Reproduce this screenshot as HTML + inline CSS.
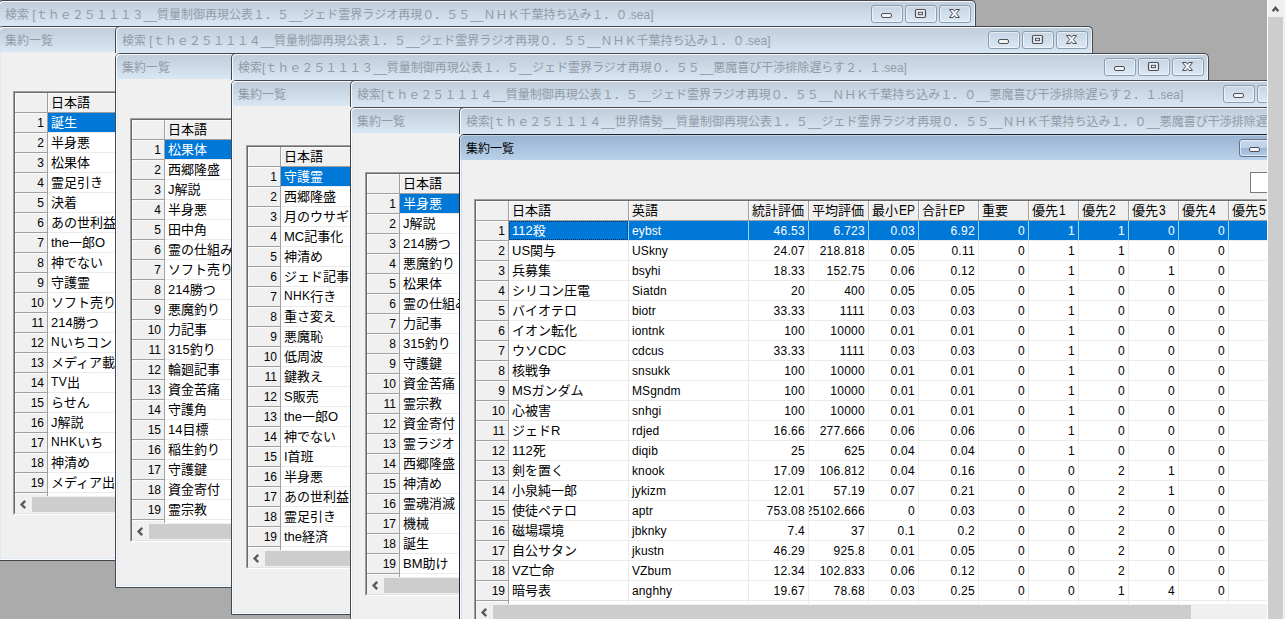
<!DOCTYPE html>
<html lang="ja"><head><meta charset="utf-8"><title>検索</title><style>
html,body{margin:0;padding:0}
body{width:1286px;height:619px;overflow:hidden;background:#ababab;position:relative;font-family:"Liberation Sans",sans-serif;font-size:12px;color:#000}
.win{position:absolute;width:978px;height:562px}
.cap{position:absolute;left:0;top:0;width:976px;height:26px;border:1px solid #434850;border-bottom:0;border-radius:5px 5px 0 0;background:linear-gradient(#bfcddb,#d9e6f4);box-shadow:inset 1px 1px 0 rgba(255,255,255,.85),inset -1px 0 0 rgba(255,255,255,.7)}
.child{position:absolute;left:0;top:27px;width:976px;height:533px;border:1px solid #434850;border-radius:5px 5px 0 0;background:#f0f0f0;box-shadow:inset 0 0 0 1px #fbfdff,inset 0 0 0 2px #dfe9f5}
.child.active{border-color:#22262b;box-shadow:inset 0 0 0 1px #fbfdff,inset 0 0 0 2px #c9dcf0}
.cap2{position:absolute;left:0;top:0;right:0;height:25px;border-radius:4px 4px 0 0;background:linear-gradient(#bfcddb,#d9e6f4);box-shadow:inset 1px 1px 0 rgba(255,255,255,.85),inset -1px 0 0 rgba(255,255,255,.7)}
.active .cap2{background:linear-gradient(#99b4d1,#b9d1ea);box-shadow:inset 1px 1px 0 rgba(255,255,255,.4),inset -1px 0 0 rgba(255,255,255,.4)}
.ttl{position:absolute;left:6px;top:6px;height:17px;white-space:nowrap}
.cap2 .ttl{left:6px;top:6px}
svg.tx{display:block;overflow:visible}
.tt{display:inline-block;font-family:"Liberation Sans","Noto Sans CJK JP",sans-serif;font-size:12px;line-height:16px;color:#929ba6;white-space:nowrap}
.active .cap2 .tt{color:#000}
.gt{flex:none;font-family:"Liberation Sans","Noto Sans CJK JP",sans-serif;font-size:13px;line-height:19px;white-space:nowrap}
.btn{position:absolute;top:4px;width:30px;height:16px;border:1px solid #8b9db4;border-radius:3px;background:linear-gradient(#c6d4e3,#dce8f5);box-shadow:inset 0 0 0 1px rgba(255,255,255,.55)}
.btn svg{display:block}
.btn.act{border-color:#5f738f;background:linear-gradient(#c9d9ec 0,#bdd0e8 48%,#9cb6d6 52%,#b4cbe6 100%)}
.grid{position:absolute;left:14px;top:64px;width:940px;height:420px;border:2px solid;border-color:#a0a0a0 #fff #fff #a0a0a0;background:#fff}
.grid:before{content:"";position:absolute;left:-1px;top:-1px;right:-1px;bottom:-1px;border:1px solid;border-color:#696969 #e3e3e3 #e3e3e3 #696969;pointer-events:none}
.gin{position:absolute;left:0;top:0;right:0;bottom:0;overflow:hidden}
.hr,.dr{height:20px;white-space:nowrap;display:flex}
.rh,.hc,.dc{box-sizing:border-box;height:20px;flex:none}
.rh{width:33px;border-right:1px solid #a0a0a0;border-bottom:1px solid #a0a0a0;background:#f0f0f0;box-shadow:inset 1px 1px 0 rgba(255,255,255,.75);text-align:right;line-height:21px;padding-right:3px}
.hc{border-right:1px solid #a0a0a0;border-bottom:1px solid #a0a0a0;background:#f0f0f0;box-shadow:inset 1px 1px 0 rgba(255,255,255,.75);position:relative}
.dc{border-right:1px solid #ebebeb;border-bottom:1px solid #ebebeb;background:#fff;position:relative;line-height:19px;white-space:nowrap;overflow:hidden}
.dc.sel{background:#0078d7;color:#fff;border-right-color:#9fd0f5;border-bottom-color:#ebebeb}
.dc.foc:after{content:"";position:absolute;left:0;top:0;right:0;bottom:0;border:1px dotted #0a2a55}
.hc,.dc{display:flex;padding-left:3px}
svg.tx{flex:none}
.as{font-size:12px;line-height:18px;letter-spacing:.3px;flex:none}
.hx{font-size:12px;line-height:19px;flex:none;display:inline-block;transform:translateY(.8px) scaleY(1.15);transform-origin:0 13.5px;letter-spacing:.1px;margin-left:1px}
.en{display:block;padding-left:3px;line-height:20.5px;letter-spacing:.12px}
.nu{display:block;text-align:right;padding-left:0;padding-right:3px;direction:rtl;line-height:20.5px;letter-spacing:.28px}
.hs{position:absolute;left:0;right:0;bottom:0;height:17px;background:#f0f0f0}
.hs .la{position:absolute;left:0;top:0}
.hs .th{position:absolute;top:1px;height:15px;background:#cdcdcd}
.tbox{position:absolute;left:790px;top:37px;width:40px;height:19px;border:1px solid #7a7a7a;background:#fff}
.vs{position:absolute;left:1267px;top:0;width:19px;height:619px;background:#f0f0f0;border-left:1px solid #fff;box-sizing:border-box}
.vs .th{position:absolute;left:0;top:17px;width:15px;bottom:0;background:#cdcdcd}
.vs svg{position:absolute;left:0;top:0}
.vs:after{content:"";position:absolute;right:0;top:0;bottom:0;width:1px;background:#fafafa}
.w1 .cap{height:25px}
.w1 .child{top:26px}
</style></head><body><div class="win w1" style="left:-2px;top:0px"><div class="cap"><div class="ttl"><span class="tt">検索 [ｔｈｅ２５１１１３__質量制御再現公表１．５__ジェド霊界ラジオ再現０．５５__ＮＨＫ千葉持ち込み１．０.sea]</span></div><div class="btn" style="right:72px"><svg width="30" height="16" viewBox="0 0 30 16"><rect x="9.5" y="7.5" width="10" height="4" rx="1.5" fill="#f4f4f6" stroke="#4a4f58"/></svg></div><div class="btn" style="right:38px"><svg width="30" height="16" viewBox="0 0 30 16"><rect x="9.5" y="3.5" width="10" height="8" rx="1.2" fill="#eceef2" stroke="#4a4f58" stroke-width="1.2"/><rect x="12.4" y="6.3" width="4.2" height="2.4" fill="#dfe6ef" stroke="#4a4f58"/></svg></div><div class="btn" style="right:4px"><svg width="30" height="16" viewBox="0 0 30 16"><path d="M9.5 3.5h3.7l1.3 1.8 1.3-1.8h3.7l-3.1 4 3.1 4h-3.7l-1.3-1.8-1.3 1.8H9.5l3.1-4z" fill="#f6f6f8" stroke="#4a4f58" stroke-width="1" stroke-linejoin="round"/></svg></div></div><div class="child" style=""><div class="cap2"><div class="ttl"><span class="tt">集約一覧</span></div><div class="btn" style="right:72px"><svg width="30" height="16" viewBox="0 0 30 16"><rect x="9.5" y="7.5" width="10" height="4" rx="1.5" fill="#f4f4f6" stroke="#4a4f58"/></svg></div><div class="btn" style="right:38px"><svg width="30" height="16" viewBox="0 0 30 16"><rect x="9.5" y="3.5" width="10" height="8" rx="1.2" fill="#eceef2" stroke="#4a4f58" stroke-width="1.2"/><rect x="12.4" y="6.3" width="4.2" height="2.4" fill="#dfe6ef" stroke="#4a4f58"/></svg></div><div class="btn" style="right:4px"><svg width="30" height="16" viewBox="0 0 30 16"><path d="M9.5 3.5h3.7l1.3 1.8 1.3-1.8h3.7l-3.1 4 3.1 4h-3.7l-1.3-1.8-1.3 1.8H9.5l3.1-4z" fill="#f6f6f8" stroke="#4a4f58" stroke-width="1" stroke-linejoin="round"/></svg></div></div><div class="grid"><div class="gin"><div class="hr"><div class="rh c0"></div><div class="hc" style="width:401px"><span class="gt">日本語</span></div></div><div class="dr"><div class="rh">1</div><div class="dc sel" style="width:401px"><span class="gt">誕生</span></div></div><div class="dr"><div class="rh">2</div><div class="dc" style="width:401px"><span class="gt">半身悪</span></div></div><div class="dr"><div class="rh">3</div><div class="dc" style="width:401px"><span class="gt">松果体</span></div></div><div class="dr"><div class="rh">4</div><div class="dc" style="width:401px"><span class="gt">霊足引き</span></div></div><div class="dr"><div class="rh">5</div><div class="dc" style="width:401px"><span class="gt">決着</span></div></div><div class="dr"><div class="rh">6</div><div class="dc" style="width:401px"><span class="gt">あの世利益</span></div></div><div class="dr"><div class="rh">7</div><div class="dc" style="width:401px"><span class="gt">the一郎O</span></div></div><div class="dr"><div class="rh">8</div><div class="dc" style="width:401px"><span class="gt">神でない</span></div></div><div class="dr"><div class="rh">9</div><div class="dc" style="width:401px"><span class="gt">守護霊</span></div></div><div class="dr"><div class="rh">10</div><div class="dc" style="width:401px"><span class="gt">ソフト売り</span></div></div><div class="dr"><div class="rh">11</div><div class="dc" style="width:401px"><span class="gt">214勝つ</span></div></div><div class="dr"><div class="rh">12</div><div class="dc" style="width:401px"><span class="as">N</span><span class="gt">いちコン</span></div></div><div class="dr"><div class="rh">13</div><div class="dc" style="width:401px"><span class="gt">メディア載り</span></div></div><div class="dr"><div class="rh">14</div><div class="dc" style="width:401px"><span class="as">TV</span><span class="gt">出</span></div></div><div class="dr"><div class="rh">15</div><div class="dc" style="width:401px"><span class="gt">らせん</span></div></div><div class="dr"><div class="rh">16</div><div class="dc" style="width:401px"><span class="gt">J解説</span></div></div><div class="dr"><div class="rh">17</div><div class="dc" style="width:401px"><span class="as">NHK</span><span class="gt">いち</span></div></div><div class="dr"><div class="rh">18</div><div class="dc" style="width:401px"><span class="gt">神清め</span></div></div><div class="dr"><div class="rh">19</div><div class="dc" style="width:401px"><span class="gt">メディア出る</span></div></div><div class="dr"><div class="rh"></div><div class="dc" style="width:401px"><span class="gt">霊の仕組み</span></div></div><div class="hs"><svg class="la" width="17" height="17" viewBox="0 0 17 17"><path d="M10.2 4.9L6.6 8.5l3.6 3.6" fill="none" stroke="#5a5a5a" stroke-width="2.4"/></svg><div class="th" style="left:17px;right:0"></div></div></div></div></div></div><div class="win" style="left:115px;top:26px"><div class="cap"><div class="ttl"><span class="tt">検索 [ｔｈｅ２５１１１４__質量制御再現公表１．５__ジェド霊界ラジオ再現０．５５__ＮＨＫ千葉持ち込み１．０.sea]</span></div><div class="btn" style="right:72px"><svg width="30" height="16" viewBox="0 0 30 16"><rect x="9.5" y="7.5" width="10" height="4" rx="1.5" fill="#f4f4f6" stroke="#4a4f58"/></svg></div><div class="btn" style="right:38px"><svg width="30" height="16" viewBox="0 0 30 16"><rect x="9.5" y="3.5" width="10" height="8" rx="1.2" fill="#eceef2" stroke="#4a4f58" stroke-width="1.2"/><rect x="12.4" y="6.3" width="4.2" height="2.4" fill="#dfe6ef" stroke="#4a4f58"/></svg></div><div class="btn" style="right:4px"><svg width="30" height="16" viewBox="0 0 30 16"><path d="M9.5 3.5h3.7l1.3 1.8 1.3-1.8h3.7l-3.1 4 3.1 4h-3.7l-1.3-1.8-1.3 1.8H9.5l3.1-4z" fill="#f6f6f8" stroke="#4a4f58" stroke-width="1" stroke-linejoin="round"/></svg></div></div><div class="child" style=""><div class="cap2"><div class="ttl"><span class="tt">集約一覧</span></div><div class="btn" style="right:72px"><svg width="30" height="16" viewBox="0 0 30 16"><rect x="9.5" y="7.5" width="10" height="4" rx="1.5" fill="#f4f4f6" stroke="#4a4f58"/></svg></div><div class="btn" style="right:38px"><svg width="30" height="16" viewBox="0 0 30 16"><rect x="9.5" y="3.5" width="10" height="8" rx="1.2" fill="#eceef2" stroke="#4a4f58" stroke-width="1.2"/><rect x="12.4" y="6.3" width="4.2" height="2.4" fill="#dfe6ef" stroke="#4a4f58"/></svg></div><div class="btn" style="right:4px"><svg width="30" height="16" viewBox="0 0 30 16"><path d="M9.5 3.5h3.7l1.3 1.8 1.3-1.8h3.7l-3.1 4 3.1 4h-3.7l-1.3-1.8-1.3 1.8H9.5l3.1-4z" fill="#f6f6f8" stroke="#4a4f58" stroke-width="1" stroke-linejoin="round"/></svg></div></div><div class="grid"><div class="gin"><div class="hr"><div class="rh c0"></div><div class="hc" style="width:401px"><span class="gt">日本語</span></div></div><div class="dr"><div class="rh">1</div><div class="dc sel" style="width:401px"><span class="gt">松果体</span></div></div><div class="dr"><div class="rh">2</div><div class="dc" style="width:401px"><span class="gt">西郷隆盛</span></div></div><div class="dr"><div class="rh">3</div><div class="dc" style="width:401px"><span class="gt">J解説</span></div></div><div class="dr"><div class="rh">4</div><div class="dc" style="width:401px"><span class="gt">半身悪</span></div></div><div class="dr"><div class="rh">5</div><div class="dc" style="width:401px"><span class="gt">田中角</span></div></div><div class="dr"><div class="rh">6</div><div class="dc" style="width:401px"><span class="gt">霊の仕組み</span></div></div><div class="dr"><div class="rh">7</div><div class="dc" style="width:401px"><span class="gt">ソフト売り</span></div></div><div class="dr"><div class="rh">8</div><div class="dc" style="width:401px"><span class="gt">214勝つ</span></div></div><div class="dr"><div class="rh">9</div><div class="dc" style="width:401px"><span class="gt">悪魔釣り</span></div></div><div class="dr"><div class="rh">10</div><div class="dc" style="width:401px"><span class="gt">力記事</span></div></div><div class="dr"><div class="rh">11</div><div class="dc" style="width:401px"><span class="gt">315釣り</span></div></div><div class="dr"><div class="rh">12</div><div class="dc" style="width:401px"><span class="gt">輪廻記事</span></div></div><div class="dr"><div class="rh">13</div><div class="dc" style="width:401px"><span class="gt">資金苦痛</span></div></div><div class="dr"><div class="rh">14</div><div class="dc" style="width:401px"><span class="gt">守護角</span></div></div><div class="dr"><div class="rh">15</div><div class="dc" style="width:401px"><span class="gt">14目標</span></div></div><div class="dr"><div class="rh">16</div><div class="dc" style="width:401px"><span class="gt">稲生釣り</span></div></div><div class="dr"><div class="rh">17</div><div class="dc" style="width:401px"><span class="gt">守護鍵</span></div></div><div class="dr"><div class="rh">18</div><div class="dc" style="width:401px"><span class="gt">資金寄付</span></div></div><div class="dr"><div class="rh">19</div><div class="dc" style="width:401px"><span class="gt">霊宗教</span></div></div><div class="dr"><div class="rh"></div><div class="dc" style="width:401px"><span class="gt">輪廻記事</span></div></div><div class="hs"><svg class="la" width="17" height="17" viewBox="0 0 17 17"><path d="M10.2 4.9L6.6 8.5l3.6 3.6" fill="none" stroke="#5a5a5a" stroke-width="2.4"/></svg><div class="th" style="left:17px;right:0"></div></div></div></div></div></div><div class="win" style="left:231px;top:53px"><div class="cap"><div class="ttl"><span class="tt">検索[ｔｈｅ２５１１１３__質量制御再現公表１．５__ジェド霊界ラジオ再現０．５５__悪魔喜び干渉排除遅らす２．１.sea]</span></div><div class="btn" style="right:72px"><svg width="30" height="16" viewBox="0 0 30 16"><rect x="9.5" y="7.5" width="10" height="4" rx="1.5" fill="#f4f4f6" stroke="#4a4f58"/></svg></div><div class="btn" style="right:38px"><svg width="30" height="16" viewBox="0 0 30 16"><rect x="9.5" y="3.5" width="10" height="8" rx="1.2" fill="#eceef2" stroke="#4a4f58" stroke-width="1.2"/><rect x="12.4" y="6.3" width="4.2" height="2.4" fill="#dfe6ef" stroke="#4a4f58"/></svg></div><div class="btn" style="right:4px"><svg width="30" height="16" viewBox="0 0 30 16"><path d="M9.5 3.5h3.7l1.3 1.8 1.3-1.8h3.7l-3.1 4 3.1 4h-3.7l-1.3-1.8-1.3 1.8H9.5l3.1-4z" fill="#f6f6f8" stroke="#4a4f58" stroke-width="1" stroke-linejoin="round"/></svg></div></div><div class="child" style=""><div class="cap2"><div class="ttl"><span class="tt">集約一覧</span></div><div class="btn" style="right:72px"><svg width="30" height="16" viewBox="0 0 30 16"><rect x="9.5" y="7.5" width="10" height="4" rx="1.5" fill="#f4f4f6" stroke="#4a4f58"/></svg></div><div class="btn" style="right:38px"><svg width="30" height="16" viewBox="0 0 30 16"><rect x="9.5" y="3.5" width="10" height="8" rx="1.2" fill="#eceef2" stroke="#4a4f58" stroke-width="1.2"/><rect x="12.4" y="6.3" width="4.2" height="2.4" fill="#dfe6ef" stroke="#4a4f58"/></svg></div><div class="btn" style="right:4px"><svg width="30" height="16" viewBox="0 0 30 16"><path d="M9.5 3.5h3.7l1.3 1.8 1.3-1.8h3.7l-3.1 4 3.1 4h-3.7l-1.3-1.8-1.3 1.8H9.5l3.1-4z" fill="#f6f6f8" stroke="#4a4f58" stroke-width="1" stroke-linejoin="round"/></svg></div></div><div class="grid"><div class="gin"><div class="hr"><div class="rh c0"></div><div class="hc" style="width:401px"><span class="gt">日本語</span></div></div><div class="dr"><div class="rh">1</div><div class="dc sel" style="width:401px"><span class="gt">守護霊</span></div></div><div class="dr"><div class="rh">2</div><div class="dc" style="width:401px"><span class="gt">西郷隆盛</span></div></div><div class="dr"><div class="rh">3</div><div class="dc" style="width:401px"><span class="gt">月のウサギ</span></div></div><div class="dr"><div class="rh">4</div><div class="dc" style="width:401px"><span class="gt">MC記事化</span></div></div><div class="dr"><div class="rh">5</div><div class="dc" style="width:401px"><span class="gt">神清め</span></div></div><div class="dr"><div class="rh">6</div><div class="dc" style="width:401px"><span class="gt">ジェド記事</span></div></div><div class="dr"><div class="rh">7</div><div class="dc" style="width:401px"><span class="as">NHK</span><span class="gt">行き</span></div></div><div class="dr"><div class="rh">8</div><div class="dc" style="width:401px"><span class="gt">重さ変え</span></div></div><div class="dr"><div class="rh">9</div><div class="dc" style="width:401px"><span class="gt">悪魔恥</span></div></div><div class="dr"><div class="rh">10</div><div class="dc" style="width:401px"><span class="gt">低周波</span></div></div><div class="dr"><div class="rh">11</div><div class="dc" style="width:401px"><span class="gt">鍵教え</span></div></div><div class="dr"><div class="rh">12</div><div class="dc" style="width:401px"><span class="gt">S販売</span></div></div><div class="dr"><div class="rh">13</div><div class="dc" style="width:401px"><span class="gt">the一郎O</span></div></div><div class="dr"><div class="rh">14</div><div class="dc" style="width:401px"><span class="gt">神でない</span></div></div><div class="dr"><div class="rh">15</div><div class="dc" style="width:401px"><span class="gt">I首班</span></div></div><div class="dr"><div class="rh">16</div><div class="dc" style="width:401px"><span class="gt">半身悪</span></div></div><div class="dr"><div class="rh">17</div><div class="dc" style="width:401px"><span class="gt">あの世利益</span></div></div><div class="dr"><div class="rh">18</div><div class="dc" style="width:401px"><span class="gt">霊足引き</span></div></div><div class="dr"><div class="rh">19</div><div class="dc" style="width:401px"><span class="gt">the経済</span></div></div><div class="dr"><div class="rh"></div><div class="dc" style="width:401px"><span class="as">N</span><span class="gt">いちコン</span></div></div><div class="hs"><svg class="la" width="17" height="17" viewBox="0 0 17 17"><path d="M10.2 4.9L6.6 8.5l3.6 3.6" fill="none" stroke="#5a5a5a" stroke-width="2.4"/></svg><div class="th" style="left:17px;right:0"></div></div></div></div></div></div><div class="win" style="left:350px;top:80px"><div class="cap"><div class="ttl"><span class="tt">検索[ｔｈｅ２５１１１４__質量制御再現公表１．５__ジェド霊界ラジオ再現０．５５__ＮＨＫ千葉持ち込み１．０__悪魔喜び干渉排除遅らす２．１.sea]</span></div><div class="btn" style="right:72px"><svg width="30" height="16" viewBox="0 0 30 16"><rect x="9.5" y="7.5" width="10" height="4" rx="1.5" fill="#f4f4f6" stroke="#4a4f58"/></svg></div><div class="btn" style="right:38px"><svg width="30" height="16" viewBox="0 0 30 16"><rect x="9.5" y="3.5" width="10" height="8" rx="1.2" fill="#eceef2" stroke="#4a4f58" stroke-width="1.2"/><rect x="12.4" y="6.3" width="4.2" height="2.4" fill="#dfe6ef" stroke="#4a4f58"/></svg></div><div class="btn" style="right:4px"><svg width="30" height="16" viewBox="0 0 30 16"><path d="M9.5 3.5h3.7l1.3 1.8 1.3-1.8h3.7l-3.1 4 3.1 4h-3.7l-1.3-1.8-1.3 1.8H9.5l3.1-4z" fill="#f6f6f8" stroke="#4a4f58" stroke-width="1" stroke-linejoin="round"/></svg></div></div><div class="child" style=""><div class="cap2"><div class="ttl"><span class="tt">集約一覧</span></div><div class="btn" style="right:72px"><svg width="30" height="16" viewBox="0 0 30 16"><rect x="9.5" y="7.5" width="10" height="4" rx="1.5" fill="#f4f4f6" stroke="#4a4f58"/></svg></div><div class="btn" style="right:38px"><svg width="30" height="16" viewBox="0 0 30 16"><rect x="9.5" y="3.5" width="10" height="8" rx="1.2" fill="#eceef2" stroke="#4a4f58" stroke-width="1.2"/><rect x="12.4" y="6.3" width="4.2" height="2.4" fill="#dfe6ef" stroke="#4a4f58"/></svg></div><div class="btn" style="right:4px"><svg width="30" height="16" viewBox="0 0 30 16"><path d="M9.5 3.5h3.7l1.3 1.8 1.3-1.8h3.7l-3.1 4 3.1 4h-3.7l-1.3-1.8-1.3 1.8H9.5l3.1-4z" fill="#f6f6f8" stroke="#4a4f58" stroke-width="1" stroke-linejoin="round"/></svg></div></div><div class="grid"><div class="gin"><div class="hr"><div class="rh c0"></div><div class="hc" style="width:401px"><span class="gt">日本語</span></div></div><div class="dr"><div class="rh">1</div><div class="dc sel" style="width:401px"><span class="gt">半身悪</span></div></div><div class="dr"><div class="rh">2</div><div class="dc" style="width:401px"><span class="gt">J解説</span></div></div><div class="dr"><div class="rh">3</div><div class="dc" style="width:401px"><span class="gt">214勝つ</span></div></div><div class="dr"><div class="rh">4</div><div class="dc" style="width:401px"><span class="gt">悪魔釣り</span></div></div><div class="dr"><div class="rh">5</div><div class="dc" style="width:401px"><span class="gt">松果体</span></div></div><div class="dr"><div class="rh">6</div><div class="dc" style="width:401px"><span class="gt">霊の仕組み</span></div></div><div class="dr"><div class="rh">7</div><div class="dc" style="width:401px"><span class="gt">力記事</span></div></div><div class="dr"><div class="rh">8</div><div class="dc" style="width:401px"><span class="gt">315釣り</span></div></div><div class="dr"><div class="rh">9</div><div class="dc" style="width:401px"><span class="gt">守護鍵</span></div></div><div class="dr"><div class="rh">10</div><div class="dc" style="width:401px"><span class="gt">資金苦痛</span></div></div><div class="dr"><div class="rh">11</div><div class="dc" style="width:401px"><span class="gt">霊宗教</span></div></div><div class="dr"><div class="rh">12</div><div class="dc" style="width:401px"><span class="gt">資金寄付</span></div></div><div class="dr"><div class="rh">13</div><div class="dc" style="width:401px"><span class="gt">霊ラジオ</span></div></div><div class="dr"><div class="rh">14</div><div class="dc" style="width:401px"><span class="gt">西郷隆盛</span></div></div><div class="dr"><div class="rh">15</div><div class="dc" style="width:401px"><span class="gt">神清め</span></div></div><div class="dr"><div class="rh">16</div><div class="dc" style="width:401px"><span class="gt">霊魂消滅</span></div></div><div class="dr"><div class="rh">17</div><div class="dc" style="width:401px"><span class="gt">機械</span></div></div><div class="dr"><div class="rh">18</div><div class="dc" style="width:401px"><span class="gt">誕生</span></div></div><div class="dr"><div class="rh">19</div><div class="dc" style="width:401px"><span class="gt">BM助け</span></div></div><div class="dr"><div class="rh"></div><div class="dc" style="width:401px"><span class="gt">輪廻記事</span></div></div><div class="hs"><svg class="la" width="17" height="17" viewBox="0 0 17 17"><path d="M10.2 4.9L6.6 8.5l3.6 3.6" fill="none" stroke="#5a5a5a" stroke-width="2.4"/></svg><div class="th" style="left:17px;right:0"></div></div></div></div></div></div><div class="win" style="left:459px;top:107px"><div class="cap"><div class="ttl"><span class="tt">検索[ｔｈｅ２５１１１４__世界情勢__質量制御再現公表１．５__ジェド霊界ラジオ再現０．５５__ＮＨＫ千葉持ち込み１．０__悪魔喜び干渉排除遅らす２．１.sea]</span></div><div class="btn" style="right:72px"><svg width="30" height="16" viewBox="0 0 30 16"><rect x="9.5" y="7.5" width="10" height="4" rx="1.5" fill="#f4f4f6" stroke="#4a4f58"/></svg></div><div class="btn" style="right:38px"><svg width="30" height="16" viewBox="0 0 30 16"><rect x="9.5" y="3.5" width="10" height="8" rx="1.2" fill="#eceef2" stroke="#4a4f58" stroke-width="1.2"/><rect x="12.4" y="6.3" width="4.2" height="2.4" fill="#dfe6ef" stroke="#4a4f58"/></svg></div><div class="btn" style="right:4px"><svg width="30" height="16" viewBox="0 0 30 16"><path d="M9.5 3.5h3.7l1.3 1.8 1.3-1.8h3.7l-3.1 4 3.1 4h-3.7l-1.3-1.8-1.3 1.8H9.5l3.1-4z" fill="#f6f6f8" stroke="#4a4f58" stroke-width="1" stroke-linejoin="round"/></svg></div></div><div class="child active" style="width:883px;"><div class="cap2"><div class="ttl"><span class="tt">集約一覧</span></div><div class="btn act" style="right:72px"><svg width="30" height="16" viewBox="0 0 30 16"><rect x="9.5" y="7.5" width="10" height="4" rx="1.5" fill="#f4f4f6" stroke="#4a4f58"/></svg></div><div class="btn act" style="right:38px"><svg width="30" height="16" viewBox="0 0 30 16"><rect x="9.5" y="3.5" width="10" height="8" rx="1.2" fill="#eceef2" stroke="#4a4f58" stroke-width="1.2"/><rect x="12.4" y="6.3" width="4.2" height="2.4" fill="#dfe6ef" stroke="#4a4f58"/></svg></div><div class="btn act" style="right:4px"><svg width="30" height="16" viewBox="0 0 30 16"><path d="M9.5 3.5h3.7l1.3 1.8 1.3-1.8h3.7l-3.1 4 3.1 4h-3.7l-1.3-1.8-1.3 1.8H9.5l3.1-4z" fill="#f6f6f8" stroke="#4a4f58" stroke-width="1" stroke-linejoin="round"/></svg></div></div><div class="tbox"></div><div class="grid" style="width:940px"><div class="gin"><div class="hr"><div class="rh c0"></div><div class="hc" style="width:120px"><span class="gt">日本語</span></div><div class="hc" style="width:120px"><span class="gt">英語</span></div><div class="hc" style="width:60px"><span class="gt">統計評価</span></div><div class="hc" style="width:60px"><span class="gt">平均評価</span></div><div class="hc" style="width:50px"><span class="gt">最小</span><span class="hx">EP</span></div><div class="hc" style="width:60px"><span class="gt">合計</span><span class="hx">EP</span></div><div class="hc" style="width:50px"><span class="gt">重要</span></div><div class="hc" style="width:50px"><span class="gt">優先</span><span class="hx">1</span></div><div class="hc" style="width:50px"><span class="gt">優先</span><span class="hx">2</span></div><div class="hc" style="width:50px"><span class="gt">優先</span><span class="hx">3</span></div><div class="hc" style="width:50px"><span class="gt">優先</span><span class="hx">4</span></div><div class="hc" style="width:50px"><span class="gt">優先</span><span class="hx">5</span></div></div><div class="dr selr"><div class="rh">1</div><div class="dc sel foc" style="width:120px"><span class="gt">112殺</span></div><div class="dc en sel" style="width:120px">eybst</div><div class="dc nu sel" style="width:60px">46.53</div><div class="dc nu sel" style="width:60px">6.723</div><div class="dc nu sel" style="width:50px">0.03</div><div class="dc nu sel" style="width:60px">6.92</div><div class="dc nu sel" style="width:50px">0</div><div class="dc nu sel" style="width:50px">1</div><div class="dc nu sel" style="width:50px">1</div><div class="dc nu sel" style="width:50px">0</div><div class="dc nu sel" style="width:50px">0</div><div class="dc nu sel" style="width:50px"></div></div><div class="dr"><div class="rh">2</div><div class="dc" style="width:120px"><span class="gt">US関与</span></div><div class="dc en" style="width:120px">USkny</div><div class="dc nu" style="width:60px">24.07</div><div class="dc nu" style="width:60px">218.818</div><div class="dc nu" style="width:50px">0.05</div><div class="dc nu" style="width:60px">0.11</div><div class="dc nu" style="width:50px">0</div><div class="dc nu" style="width:50px">1</div><div class="dc nu" style="width:50px">1</div><div class="dc nu" style="width:50px">0</div><div class="dc nu" style="width:50px">0</div><div class="dc nu" style="width:50px"></div></div><div class="dr"><div class="rh">3</div><div class="dc" style="width:120px"><span class="gt">兵募集</span></div><div class="dc en" style="width:120px">bsyhi</div><div class="dc nu" style="width:60px">18.33</div><div class="dc nu" style="width:60px">152.75</div><div class="dc nu" style="width:50px">0.06</div><div class="dc nu" style="width:60px">0.12</div><div class="dc nu" style="width:50px">0</div><div class="dc nu" style="width:50px">1</div><div class="dc nu" style="width:50px">0</div><div class="dc nu" style="width:50px">1</div><div class="dc nu" style="width:50px">0</div><div class="dc nu" style="width:50px"></div></div><div class="dr"><div class="rh">4</div><div class="dc" style="width:120px"><span class="gt">シリコン圧電</span></div><div class="dc en" style="width:120px">Siatdn</div><div class="dc nu" style="width:60px">20</div><div class="dc nu" style="width:60px">400</div><div class="dc nu" style="width:50px">0.05</div><div class="dc nu" style="width:60px">0.05</div><div class="dc nu" style="width:50px">0</div><div class="dc nu" style="width:50px">1</div><div class="dc nu" style="width:50px">0</div><div class="dc nu" style="width:50px">0</div><div class="dc nu" style="width:50px">0</div><div class="dc nu" style="width:50px"></div></div><div class="dr"><div class="rh">5</div><div class="dc" style="width:120px"><span class="gt">バイオテロ</span></div><div class="dc en" style="width:120px">biotr</div><div class="dc nu" style="width:60px">33.33</div><div class="dc nu" style="width:60px">1111</div><div class="dc nu" style="width:50px">0.03</div><div class="dc nu" style="width:60px">0.03</div><div class="dc nu" style="width:50px">0</div><div class="dc nu" style="width:50px">1</div><div class="dc nu" style="width:50px">0</div><div class="dc nu" style="width:50px">0</div><div class="dc nu" style="width:50px">0</div><div class="dc nu" style="width:50px"></div></div><div class="dr"><div class="rh">6</div><div class="dc" style="width:120px"><span class="gt">イオン転化</span></div><div class="dc en" style="width:120px">iontnk</div><div class="dc nu" style="width:60px">100</div><div class="dc nu" style="width:60px">10000</div><div class="dc nu" style="width:50px">0.01</div><div class="dc nu" style="width:60px">0.01</div><div class="dc nu" style="width:50px">0</div><div class="dc nu" style="width:50px">1</div><div class="dc nu" style="width:50px">0</div><div class="dc nu" style="width:50px">0</div><div class="dc nu" style="width:50px">0</div><div class="dc nu" style="width:50px"></div></div><div class="dr"><div class="rh">7</div><div class="dc" style="width:120px"><span class="gt">ウソCDC</span></div><div class="dc en" style="width:120px">cdcus</div><div class="dc nu" style="width:60px">33.33</div><div class="dc nu" style="width:60px">1111</div><div class="dc nu" style="width:50px">0.03</div><div class="dc nu" style="width:60px">0.03</div><div class="dc nu" style="width:50px">0</div><div class="dc nu" style="width:50px">1</div><div class="dc nu" style="width:50px">0</div><div class="dc nu" style="width:50px">0</div><div class="dc nu" style="width:50px">0</div><div class="dc nu" style="width:50px"></div></div><div class="dr"><div class="rh">8</div><div class="dc" style="width:120px"><span class="gt">核戦争</span></div><div class="dc en" style="width:120px">snsukk</div><div class="dc nu" style="width:60px">100</div><div class="dc nu" style="width:60px">10000</div><div class="dc nu" style="width:50px">0.01</div><div class="dc nu" style="width:60px">0.01</div><div class="dc nu" style="width:50px">0</div><div class="dc nu" style="width:50px">1</div><div class="dc nu" style="width:50px">0</div><div class="dc nu" style="width:50px">0</div><div class="dc nu" style="width:50px">0</div><div class="dc nu" style="width:50px"></div></div><div class="dr"><div class="rh">9</div><div class="dc" style="width:120px"><span class="gt">MSガンダム</span></div><div class="dc en" style="width:120px">MSgndm</div><div class="dc nu" style="width:60px">100</div><div class="dc nu" style="width:60px">10000</div><div class="dc nu" style="width:50px">0.01</div><div class="dc nu" style="width:60px">0.01</div><div class="dc nu" style="width:50px">0</div><div class="dc nu" style="width:50px">1</div><div class="dc nu" style="width:50px">0</div><div class="dc nu" style="width:50px">0</div><div class="dc nu" style="width:50px">0</div><div class="dc nu" style="width:50px"></div></div><div class="dr"><div class="rh">10</div><div class="dc" style="width:120px"><span class="gt">心被害</span></div><div class="dc en" style="width:120px">snhgi</div><div class="dc nu" style="width:60px">100</div><div class="dc nu" style="width:60px">10000</div><div class="dc nu" style="width:50px">0.01</div><div class="dc nu" style="width:60px">0.01</div><div class="dc nu" style="width:50px">0</div><div class="dc nu" style="width:50px">1</div><div class="dc nu" style="width:50px">0</div><div class="dc nu" style="width:50px">0</div><div class="dc nu" style="width:50px">0</div><div class="dc nu" style="width:50px"></div></div><div class="dr"><div class="rh">11</div><div class="dc" style="width:120px"><span class="gt">ジェドR</span></div><div class="dc en" style="width:120px">rdjed</div><div class="dc nu" style="width:60px">16.66</div><div class="dc nu" style="width:60px">277.666</div><div class="dc nu" style="width:50px">0.06</div><div class="dc nu" style="width:60px">0.06</div><div class="dc nu" style="width:50px">0</div><div class="dc nu" style="width:50px">1</div><div class="dc nu" style="width:50px">0</div><div class="dc nu" style="width:50px">0</div><div class="dc nu" style="width:50px">0</div><div class="dc nu" style="width:50px"></div></div><div class="dr"><div class="rh">12</div><div class="dc" style="width:120px"><span class="gt">112死</span></div><div class="dc en" style="width:120px">diqib</div><div class="dc nu" style="width:60px">25</div><div class="dc nu" style="width:60px">625</div><div class="dc nu" style="width:50px">0.04</div><div class="dc nu" style="width:60px">0.04</div><div class="dc nu" style="width:50px">0</div><div class="dc nu" style="width:50px">1</div><div class="dc nu" style="width:50px">0</div><div class="dc nu" style="width:50px">0</div><div class="dc nu" style="width:50px">0</div><div class="dc nu" style="width:50px"></div></div><div class="dr"><div class="rh">13</div><div class="dc" style="width:120px"><span class="gt">剣を置く</span></div><div class="dc en" style="width:120px">knook</div><div class="dc nu" style="width:60px">17.09</div><div class="dc nu" style="width:60px">106.812</div><div class="dc nu" style="width:50px">0.04</div><div class="dc nu" style="width:60px">0.16</div><div class="dc nu" style="width:50px">0</div><div class="dc nu" style="width:50px">0</div><div class="dc nu" style="width:50px">2</div><div class="dc nu" style="width:50px">1</div><div class="dc nu" style="width:50px">0</div><div class="dc nu" style="width:50px"></div></div><div class="dr"><div class="rh">14</div><div class="dc" style="width:120px"><span class="gt">小泉純一郎</span></div><div class="dc en" style="width:120px">jykizm</div><div class="dc nu" style="width:60px">12.01</div><div class="dc nu" style="width:60px">57.19</div><div class="dc nu" style="width:50px">0.07</div><div class="dc nu" style="width:60px">0.21</div><div class="dc nu" style="width:50px">0</div><div class="dc nu" style="width:50px">0</div><div class="dc nu" style="width:50px">2</div><div class="dc nu" style="width:50px">1</div><div class="dc nu" style="width:50px">0</div><div class="dc nu" style="width:50px"></div></div><div class="dr"><div class="rh">15</div><div class="dc" style="width:120px"><span class="gt">使徒ペテロ</span></div><div class="dc en" style="width:120px">aptr</div><div class="dc nu" style="width:60px">753.08</div><div class="dc nu" style="width:60px">25102.666</div><div class="dc nu" style="width:50px">0</div><div class="dc nu" style="width:60px">0.03</div><div class="dc nu" style="width:50px">0</div><div class="dc nu" style="width:50px">0</div><div class="dc nu" style="width:50px">2</div><div class="dc nu" style="width:50px">0</div><div class="dc nu" style="width:50px">0</div><div class="dc nu" style="width:50px"></div></div><div class="dr"><div class="rh">16</div><div class="dc" style="width:120px"><span class="gt">磁場環境</span></div><div class="dc en" style="width:120px">jbknky</div><div class="dc nu" style="width:60px">7.4</div><div class="dc nu" style="width:60px">37</div><div class="dc nu" style="width:50px">0.1</div><div class="dc nu" style="width:60px">0.2</div><div class="dc nu" style="width:50px">0</div><div class="dc nu" style="width:50px">0</div><div class="dc nu" style="width:50px">2</div><div class="dc nu" style="width:50px">0</div><div class="dc nu" style="width:50px">0</div><div class="dc nu" style="width:50px"></div></div><div class="dr"><div class="rh">17</div><div class="dc" style="width:120px"><span class="gt">自公サタン</span></div><div class="dc en" style="width:120px">jkustn</div><div class="dc nu" style="width:60px">46.29</div><div class="dc nu" style="width:60px">925.8</div><div class="dc nu" style="width:50px">0.01</div><div class="dc nu" style="width:60px">0.05</div><div class="dc nu" style="width:50px">0</div><div class="dc nu" style="width:50px">0</div><div class="dc nu" style="width:50px">2</div><div class="dc nu" style="width:50px">0</div><div class="dc nu" style="width:50px">0</div><div class="dc nu" style="width:50px"></div></div><div class="dr"><div class="rh">18</div><div class="dc" style="width:120px"><span class="gt">VZ亡命</span></div><div class="dc en" style="width:120px">VZbum</div><div class="dc nu" style="width:60px">12.34</div><div class="dc nu" style="width:60px">102.833</div><div class="dc nu" style="width:50px">0.06</div><div class="dc nu" style="width:60px">0.12</div><div class="dc nu" style="width:50px">0</div><div class="dc nu" style="width:50px">0</div><div class="dc nu" style="width:50px">2</div><div class="dc nu" style="width:50px">0</div><div class="dc nu" style="width:50px">0</div><div class="dc nu" style="width:50px"></div></div><div class="dr"><div class="rh">19</div><div class="dc" style="width:120px"><span class="gt">暗号表</span></div><div class="dc en" style="width:120px">anghhy</div><div class="dc nu" style="width:60px">19.67</div><div class="dc nu" style="width:60px">78.68</div><div class="dc nu" style="width:50px">0.03</div><div class="dc nu" style="width:60px">0.25</div><div class="dc nu" style="width:50px">0</div><div class="dc nu" style="width:50px">0</div><div class="dc nu" style="width:50px">1</div><div class="dc nu" style="width:50px">4</div><div class="dc nu" style="width:50px">0</div><div class="dc nu" style="width:50px"></div></div><div class="dr"><div class="rh"></div><div class="dc" style="width:120px"><span class="gt">自公サタン</span></div><div class="dc en" style="width:120px"></div><div class="dc nu" style="width:60px"></div><div class="dc nu" style="width:60px"></div><div class="dc nu" style="width:50px"></div><div class="dc nu" style="width:60px"></div><div class="dc nu" style="width:50px"></div><div class="dc nu" style="width:50px"></div><div class="dc nu" style="width:50px"></div><div class="dc nu" style="width:50px"></div><div class="dc nu" style="width:50px"></div><div class="dc nu" style="width:50px"></div></div><div class="hs"><svg class="la" width="17" height="17" viewBox="0 0 17 17"><path d="M10.2 4.9L6.6 8.5l3.6 3.6" fill="none" stroke="#5a5a5a" stroke-width="2.4"/></svg><div class="th" style="left:17px;width:698px"></div></div></div></div></div></div><div class="vs"><div class="th"></div><svg width="17" height="17" viewBox="0 0 17 17"><path d="M4.7 11.3L7.5 7.8l2.8 3.5" fill="none" stroke="#505050" stroke-width="2.2"/></svg></div></body></html>
